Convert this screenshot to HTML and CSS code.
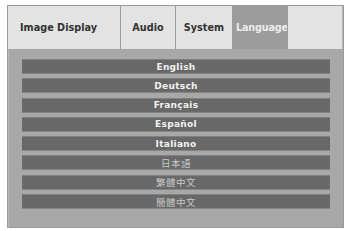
FILE: index.html
```html
<!DOCTYPE html>
<html>
<head>
<meta charset="utf-8">
<link rel="stylesheet" href="styles.css">
</head>
<body>
<div class="frame">
  <div class="tabs">
    <div class="tab tab-image">Image Display</div>
    <div class="tab tab-audio">Audio</div>
    <div class="tab tab-system">System</div>
    <div class="tab tab-lang active">Language</div>
    <div class="tab-rest"></div>
  </div>
  <div class="panel">
    <div class="bar">English</div>
    <div class="bar">Deutsch</div>
    <div class="bar">Français</div>
    <div class="bar">Español</div>
    <div class="bar">Italiano</div>
    <div class="bar cjk">日本語</div>
    <div class="bar cjk">繁體中文</div>
    <div class="bar cjk">簡體中文</div>
  </div>
</div>
</body>
</html>
```

FILE: styles.css
```css
html, body {
  margin: 0;
  padding: 0;
  background: #ffffff;
}
.frame {
  margin: 5px 0 0 7px;
  width: 335px;
  height: 221px;
  border: 1px solid #9a9a9a;
  display: flex;
  flex-direction: column;
  background: #a9a9a9;
}
.tabs {
  display: flex;
  height: 44px;
  background: #e3e3e3;
  border-bottom: 1px solid #a6a6a6;
  box-sizing: border-box;
}
.tab {
  display: flex;
  align-items: center;
  justify-content: center;
  font-family: "DejaVu Sans", sans-serif;
  font-weight: bold;
  font-size: 9.7px;
  color: #333333;
  border-right: 1px solid #9c9c9c;
  box-sizing: border-box;
}
.tab-image {
  width: 113px;
  justify-content: flex-start;
  padding-left: 12px;
}
.tab-audio { width: 55px; }
.tab-system { width: 57px; }
.tab-lang { width: 55px; }
.tab.active {
  background: #9c9c9c;
  color: #ececec;
  justify-content: flex-start;
  padding-left: 3px;
  overflow: hidden;
  white-space: nowrap;
  letter-spacing: -0.2px;
}
.tab-rest {
  flex: 1;
  border-right: 1px solid #b5b5b5;
}
.panel {
  flex: 1;
  padding: 9px 13px 0 14px;
  display: flex;
  flex-direction: column;
  gap: 4.3px;
  background: #a8a8a8;
  box-shadow: inset 6px 0 0 -5px #b8b8b8;
}
.bar {
  height: 15px;
  box-sizing: border-box;
  background: #686868;
  border-top: 1px solid #808080;
  border-bottom: 1px solid #858585;
  display: flex;
  align-items: center;
  justify-content: center;
  font-family: "DejaVu Sans", sans-serif;
  font-weight: bold;
  font-size: 9px;
  letter-spacing: 0.3px;
  color: #f2f2f2;
}
.bar.cjk {
  font-family: "Noto Sans CJK JP", "Noto Sans CJK TC", sans-serif;
  font-weight: normal;
  font-size: 9.5px;
  color: #c8c8c8;
  letter-spacing: 0.5px;
}
```
